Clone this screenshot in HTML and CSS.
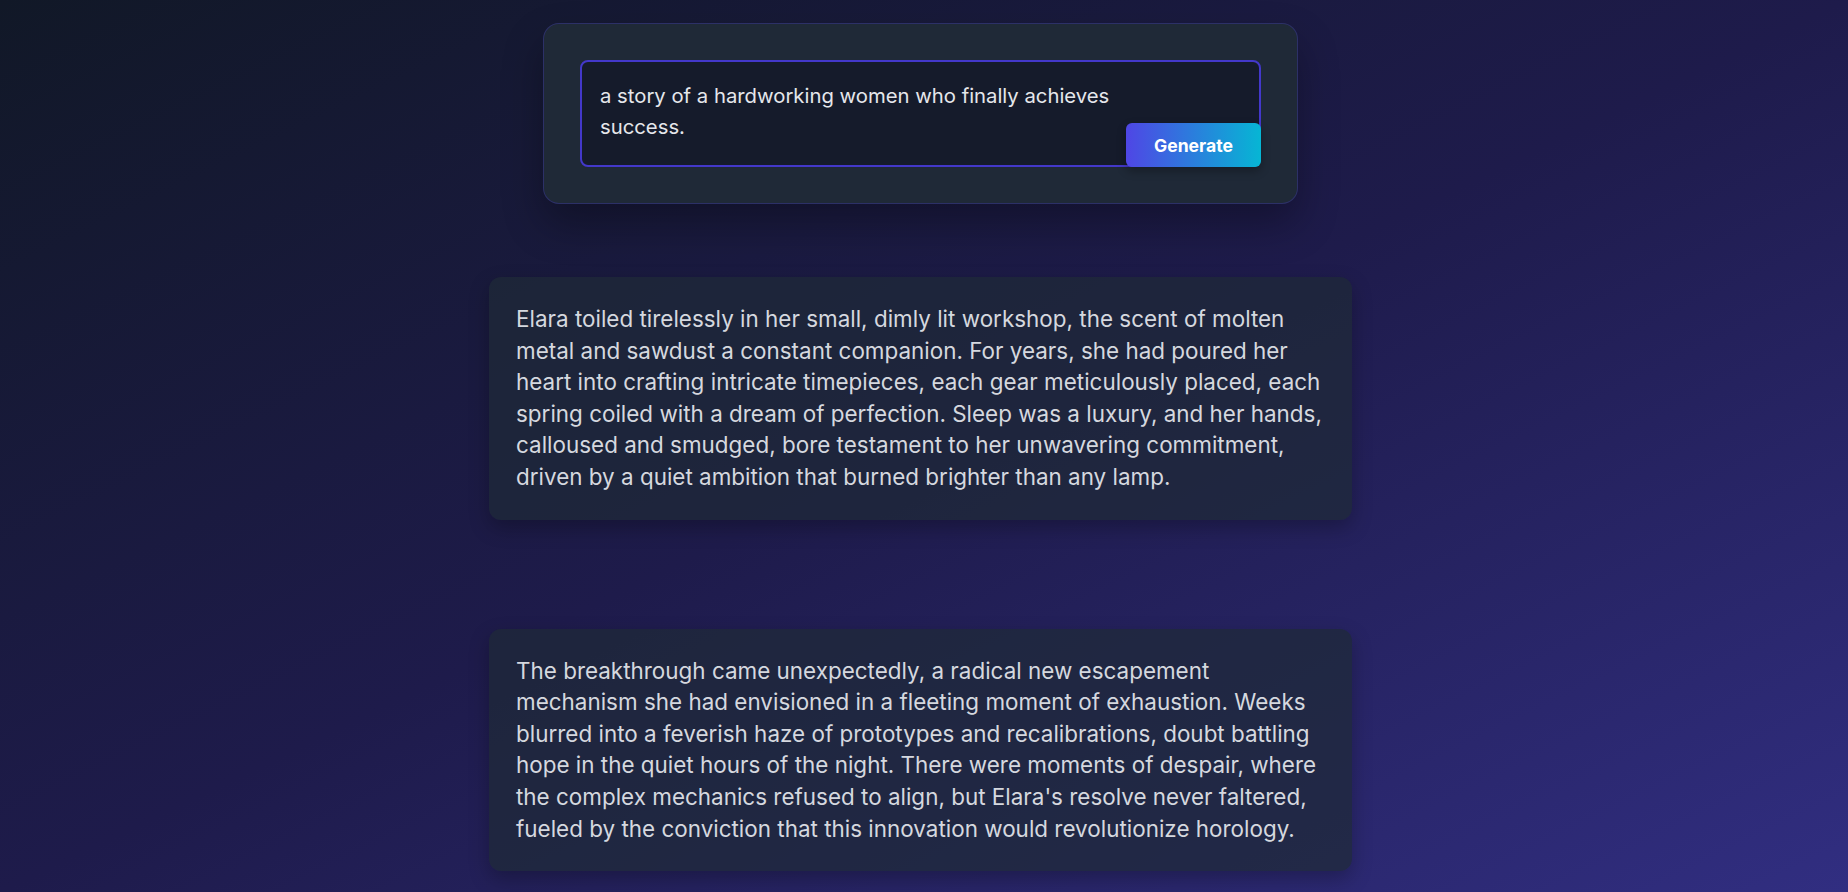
FILE: index.html
```html
<!DOCTYPE html>
<html lang="en">
<head>
<meta charset="utf-8">
<title>Story Generator</title>
<link rel="stylesheet" href="styles.css">
</head>
<body>
<main class="page">
  <section class="prompt-card">
    <div class="prompt-field">
      <textarea class="prompt-input">a story of a hardworking women who finally achieves success.</textarea>
      <button class="generate-btn" type="button">Generate</button>
    </div>
  </section>

  <section class="stories">
    <article class="story-card">
      <p>Elara toiled tirelessly in her small, dimly lit workshop, the scent of molten metal and sawdust a constant companion. For years, she had poured her heart into crafting intricate timepieces, each gear meticulously placed, each spring coiled with a dream of perfection. Sleep was a luxury, and her hands, calloused and smudged, bore testament to her unwavering commitment, driven by a quiet ambition that burned brighter than any lamp.</p>
    </article>
    <article class="story-card">
      <p>The breakthrough came unexpectedly, a radical new escapement mechanism she had envisioned in a fleeting moment of exhaustion. Weeks blurred into a feverish haze of prototypes and recalibrations, doubt battling hope in the quiet hours of the night. There were moments of despair, where the complex mechanics refused to align, but Elara's resolve never faltered, fueled by the conviction that this innovation would revolutionize horology.</p>
    </article>
  </section>
</main>
</body>
</html>
```

FILE: styles.css
```css
* {
  box-sizing: border-box;
}

html, body {
  margin: 0;
  padding: 0;
}

body {
  min-height: 100vh;
  height: 892px;
  overflow: hidden;
  font-family: Inter, "Noto Sans", sans-serif;
  background: linear-gradient(to bottom right, #111827 0%, #1e1b4b 50%, #312e81 100%);
  color: #d1d5db;
}

.page {
  display: flex;
  flex-direction: column;
  align-items: center;
  padding: 23px 7px 0 0;
}

.prompt-card {
  width: 755px;
  padding: 36px;
  background: #1f2937;
  border: 1px solid rgba(79, 70, 229, 0.28);
  border-radius: 16px;
  box-shadow: 0 20px 40px rgba(0, 0, 0, 0.3);
}

.prompt-field {
  position: relative;
}

.prompt-input {
  display: block;
  width: 100%;
  height: 107px;
  margin: 0;
  padding: 18px 140px 18px 18px;
  resize: none;
  font-family: Inter, "Noto Sans", sans-serif;
  font-size: 20.3px;
  line-height: 31px;
  color: #e5e7eb;
  background: #151b2b;
  border: 2px solid #4338ca;
  border-radius: 8px;
  outline: none;
  overflow: hidden;
}

.generate-btn {
  position: absolute;
  right: 0;
  bottom: 0;
  width: 135px;
  height: 44px;
  border: none;
  border-radius: 6px;
  background: linear-gradient(to right, #4f46e5, #06b6d4);
  color: #ffffff;
  font-family: Inter, "Noto Sans", sans-serif;
  font-size: 17.6px;
  font-weight: 700;
  box-shadow: 0 4px 10px rgba(0, 0, 0, 0.3);
  cursor: pointer;
}

.stories {
  display: flex;
  flex-direction: column;
  gap: 109px;
  margin-top: 73px;
}

.story-card {
  width: 863px;
  padding: 26px 20px 27px 27px;
  background: rgba(31, 41, 55, 0.72);
  border-radius: 12px;
  box-shadow: 0 8px 20px rgba(0, 0, 0, 0.25);
}

.story-card p {
  margin: 0;
  font-size: 22.45px;
  line-height: 31.6px;
  color: #d5d8df;
}
```
